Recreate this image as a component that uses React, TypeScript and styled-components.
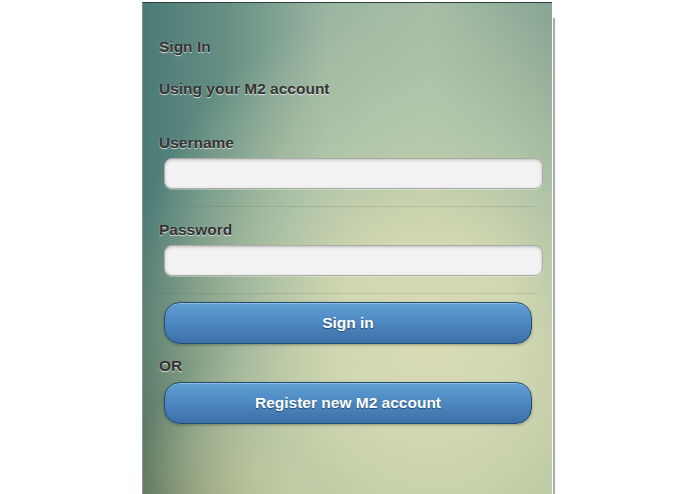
import React from "react";
import styled, { createGlobalStyle } from "styled-components";

const GlobalStyle = createGlobalStyle`
  html, body {
    margin: 0;
    padding: 0;
    background: #ffffff;
  }
  body {
    font-family: "Liberation Sans", Arial, sans-serif;
  }
`;

const Page = styled.div`
  display: flex;
  width: 695px;
  height: 494px;
  padding-left: 142px;
  box-sizing: border-box;
  overflow: hidden;
`;

const Panel = styled.div`
  width: 410px;
  height: 492px;
  margin-top: 2px;
  border-left: 1px solid #8d9692;
  border-top: 1px solid #2f3d3b;
  box-sizing: border-box;
  display: flex;
  flex-direction: column;
  background:
    radial-gradient(ellipse 75% 70% at 70% 68%, #dadcb3 0%, #d0d7b1 30%, rgba(186, 203, 170, 0.75) 58%, rgba(160, 185, 160, 0) 100%),
    radial-gradient(ellipse 80% 40% at 75% 100%, #dbd8a5 0%, rgba(214, 212, 160, 0.85) 50%, rgba(214, 212, 160, 0) 100%),
    linear-gradient(to bottom, rgba(0, 0, 0, 0) 40%, rgba(100, 105, 65, 0.5) 100%),
    linear-gradient(to right, #4b7a76 0%, #6a9285 22%, #9ab5a1 45%, #a4bda6 70%, #89a695 100%);
`;

const ScrollEdge = styled.div`
  width: 2px;
  height: 476px;
  margin-top: 18px;
  margin-left: 1px;
  background: #a9a9a9;
`;

const Text = styled.div<{ $top: number }>`
  margin: ${(p) => p.$top}px 0 0 16px;
  font-size: 15.5px;
  line-height: 20px;
  font-weight: 700;
  color: #333333;
  text-shadow: 0 1px 1px rgba(255, 255, 255, 0.75);
`;

const Field = styled.input`
  display: block;
  margin: 5px 9px 0 21px;
  height: 31px;
  box-sizing: border-box;
  border: 1px solid #a9ada6;
  border-radius: 8px;
  background: #f2f2f2;
  box-shadow: inset 0 1px 3px rgba(0, 0, 0, 0.22), 0 1px 0 rgba(255, 255, 255, 0.3);
  outline: none;
  padding: 0 8px;
  font-family: inherit;
  font-size: 15px;
`;

const Divider = styled.div`
  height: 0;
  margin: 17px 15px 0 16px;
  border-top: 1px solid rgba(90, 100, 70, 0.18);
`;

const Button = styled.button<{ $top: number }>`
  display: block;
  margin: ${(p) => p.$top}px 20px 0 21px;
  height: 42px;
  box-sizing: border-box;
  border: 1px solid #1f4d77;
  border-radius: 16px;
  background: linear-gradient(to bottom, #5f9fd3 0%, #4d87c0 50%, #3c6fa7 100%);
  box-shadow: inset 0 1px 0 rgba(255, 255, 255, 0.3), 0 1px 3px rgba(0, 0, 0, 0.3);
  color: #ffffff;
  font-family: inherit;
  font-size: 15.5px;
  font-weight: 700;
  text-shadow: 0 1px 1px #1d4a74;
  cursor: pointer;
`;

export default function App() {
  return (
    <>
      <GlobalStyle />
      <Page>
        <Panel>
          <Text $top={34}>Sign In</Text>
          <Text $top={22}>Using your M2 account</Text>
          <Text $top={34}>Username</Text>
          <Field type="text" />
          <Divider />
          <Text $top={13}>Password</Text>
          <Field type="password" />
          <Divider />
          <Button $top={8}>Sign in</Button>
          <Text $top={12}>OR</Text>
          <Button $top={6}>Register new M2 account</Button>
        </Panel>
        <ScrollEdge />
      </Page>
    </>
  );
}
